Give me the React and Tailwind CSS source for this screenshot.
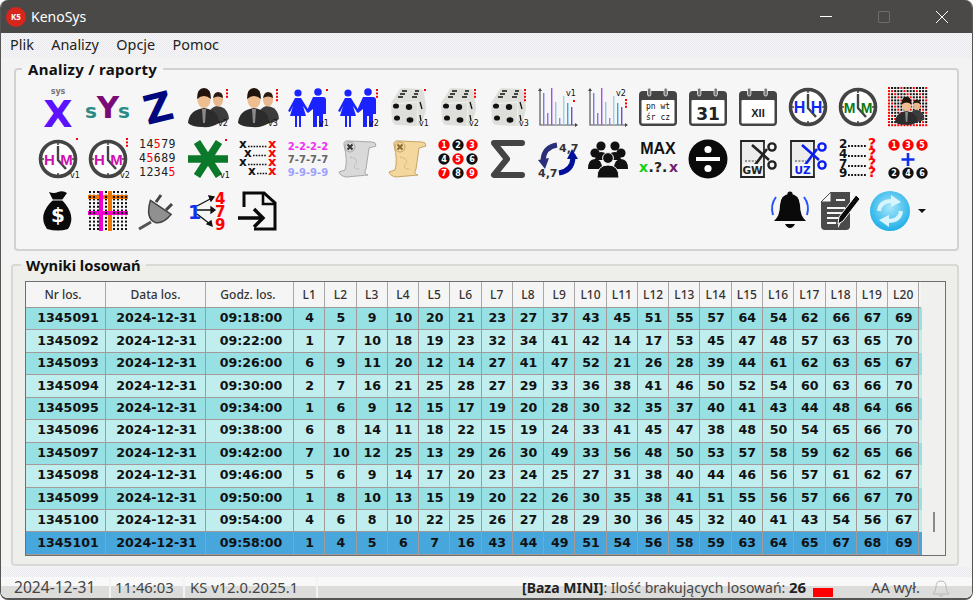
import React from "react";

const SANS = "font-['Noto_Sans',sans-serif]";
const BOLD = "DejaVu Sans, sans-serif";

const rows = [
  ["1345091", "09:18:00", [4, 5, 9, 10, 20, 21, 23, 27, 37, 43, 45, 51, 55, 57, 64, 54, 62, 66, 67, 69]],
  ["1345092", "09:22:00", [1, 7, 10, 18, 19, 23, 32, 34, 41, 42, 14, 17, 53, 45, 47, 48, 57, 63, 65, 70]],
  ["1345093", "09:26:00", [6, 9, 11, 20, 12, 14, 27, 41, 47, 52, 21, 26, 28, 39, 44, 61, 62, 63, 65, 67]],
  ["1345094", "09:30:00", [2, 7, 16, 21, 25, 28, 27, 29, 33, 36, 38, 41, 46, 50, 52, 54, 60, 63, 66, 70]],
  ["1345095", "09:34:00", [1, 6, 9, 12, 15, 17, 19, 20, 28, 30, 32, 35, 37, 40, 41, 43, 44, 48, 64, 66]],
  ["1345096", "09:38:00", [6, 8, 14, 11, 18, 22, 15, 19, 24, 33, 41, 45, 47, 38, 48, 50, 54, 65, 66, 70]],
  ["1345097", "09:42:00", [7, 10, 12, 25, 13, 29, 26, 30, 49, 33, 56, 48, 50, 53, 57, 58, 59, 62, 65, 66]],
  ["1345098", "09:46:00", [5, 6, 9, 14, 17, 20, 23, 24, 25, 27, 31, 38, 40, 44, 46, 56, 57, 61, 62, 67]],
  ["1345099", "09:50:00", [1, 8, 10, 13, 15, 19, 20, 22, 26, 30, 35, 38, 41, 51, 55, 56, 57, 66, 67, 70]],
  ["1345100", "09:54:00", [4, 6, 8, 10, 22, 25, 26, 27, 28, 29, 30, 36, 45, 32, 40, 41, 43, 54, 56, 67]],
  ["1345101", "09:58:00", [1, 4, 5, 6, 7, 16, 43, 44, 49, 51, 54, 56, 58, 59, 63, 64, 65, 67, 68, 69]],
];

const header = ["Nr los.", "Data los.", "Godz. los.", ...Array.from({ length: 20 }, (_, i) => `L${i + 1}`)];

// one toolbar cell, the drawing itself is 40x40
function Ico({ children }) {
  return (
    <button className="w-[50px] h-[52px] flex items-center justify-center shrink-0">
      <svg width="40" height="40" viewBox="0 0 40 40" className="overflow-visible">
        {children}
      </svg>
    </button>
  );
}

function T({ x, y, s = 8, fill = "#111", w = 400, a = "start", f = BOLD, children }) {
  return (
    <text x={x} y={y} fontSize={s} fill={fill} fontWeight={w} textAnchor={a} fontFamily={f}>
      {children}
    </text>
  );
}

const Ver = ({ v, x = 30, y = 39 }) => <T x={x} y={y} s={8}>{v}</T>;

function Dots({ n, x = 38, y = 2 }) {
  return (
    <>
      {Array.from({ length: n }, (_, i) => (
        <rect key={i} x={x} y={y + i * 3.4} width="2" height="2" fill="#f00" />
      ))}
    </>
  );
}

function Men() {
  return (
    <>
      <path d="M19 36 Q20 20 29 19 Q40 20 41 32 Q34 38 19 36Z" fill="#3c3c3c" />
      <ellipse cx="30" cy="13" rx="5" ry="6.5" fill="#e9b88c" />
      <path d="M25 11 Q26 5 30 5 Q35 5 35 11 Q30 8 25 11Z" fill="#2a1c14" />
      <path d="M0 36 Q1 23 16 21 Q31 23 31 36 Q24 41 14 40 Q4 40 0 36Z" fill="#2c2c2c" />
      <path d="M14 22 L18 22 L17 36 L15 36Z" fill="#8a8a8a" />
      <ellipse cx="16" cy="13" rx="6.5" ry="8" fill="#eebd90" />
      <path d="M9 12 Q9 1 16 1 Q23 1 23 12 Q16 6 9 12Z" fill="#20140c" />
    </>
  );
}

function Couple() {
  const c = "#1a22ff";
  return (
    <>
      <circle cx="10" cy="6" r="3.6" fill={c} />
      <path d="M7 11 H13 L21 24 L19 25 L15 19 L18 29 H13 V40 H11 V29 H9 V40 H7 V29 H2 L5 19 L2 25 L0 24Z" fill={c} />
      <circle cx="30" cy="5" r="3.8" fill={c} />
      <path d="M25 10 H35 Q38 10 38 13 V27 H35 V40 H31 V29 H29 V40 H25 V22 L20 26 L18.5 24.5Z" fill={c} />
    </>
  );
}

function Dice() {
  return (
    <>
      <path d="M3 17 Q3 14 5 13 L11 3 Q12 1 15 1 L33 2 Q35 2 36 6 L38 20 Q38 25 35 32 L33 37 Q32 39 29 39 L9 38 Q5 38 4 33Z" fill="#dededa" />
      <path d="M3 17 L30 15 L29 39" fill="none" stroke="#f2f2ef" strokeWidth="1" />
      <g fill="#111">
        <ellipse cx="8" cy="19" rx="3" ry="2.6" />
        <ellipse cx="21" cy="20" rx="3.2" ry="3" />
        <ellipse cx="9" cy="31" rx="3" ry="2.6" />
        <ellipse cx="22" cy="33" rx="3.4" ry="2.8" />
      </g>
      <g stroke="#111" strokeWidth="1.7" fill="none">
        <path d="M14 4 H19 M12 7 H17 M10 10 H15" />
        <path d="M27 4 H31 M26 7 H30 M24 10 H29" />
        <path d="M32 15 L34 22 M32 28 L33 34" strokeWidth="1.3" />
      </g>
    </>
  );
}

function Chart({ bars }) {
  return (
    <>
      <path d="M2 3 V38 H38" fill="none" stroke="#555" strokeWidth="1.2" />
      <path d="M0 4 L2 1 L4 4Z M37 36 L40 38 L37 40Z" fill="#444" />
      {bars.map(([x, h, c]) => (
        <rect key={x} x={x} y={38 - h} width="1.4" height={h} fill={c} />
      ))}
    </>
  );
}

const barsA = [
  [5, 32, "#7a78f0"], [9, 12, "#8a70e0"], [13, 37, "#a050f0"], [17, 23, "#8cc8ea"],
  [21, 7, "#8a8af0"], [25, 29, "#90d8f0"], [29, 22, "#30a8e8"], [33, 18, "#6a50d8"],
];

function Cal({ children }) {
  return (
    <>
      <rect x="1" y="4" width="38" height="35" rx="4" fill="#444" />
      <rect x="3.5" y="13" width="33" height="23.5" rx="1" fill="#fff" />
      <rect x="9.5" y="1" width="3.4" height="8" rx="1.7" fill="#777" stroke="#f5f5f5" strokeWidth="0.8" />
      <rect x="26" y="1" width="3.4" height="8" rx="1.7" fill="#777" stroke="#f5f5f5" strokeWidth="0.8" />
      {children}
    </>
  );
}

function Clock({ a, b, c, s = 16 }) {
  return (
    <>
      <circle cx="20" cy="20" r="17.5" fill="#fff" stroke="#444" strokeWidth="3.6" />
      <path d="M20 1 V6 M20 34 V39 M1 20 H6 M34 20 H39" stroke="#444" strokeWidth="1.6" />
      <path d="M20 7 V21 L28 30" fill="none" stroke="#444" strokeWidth="2.4" />
      <T x="11.5" y="26" s={s} fill={c} w={700} a="middle" f="Liberation Sans, sans-serif">{a}</T>
      <T x="28.5" y="26" s={s} fill={c} w={700} a="middle" f="Liberation Sans, sans-serif">{b}</T>
    </>
  );
}

function Qr() {
  const cells = [];
  for (let i = 0; i < 13; i++) {
    for (let j = 0; j < 13; j++) {
      const red = (i * 5 + j * 3) % 4 === 0 || i === 0 || j === 12;
      cells.push(<rect key={`${i}-${j}`} x={i * 3.1} y={j * 3.1} width="2" height="2" fill={red ? "#f00" : "#111"} />);
    }
  }
  return (
    <>
      {cells}
      <g transform="translate(7 9) scale(0.72)">
        <Men />
      </g>
    </>
  );
}

function NumGrid() {
  const Row = ({ y, d }) => (
    <text y={y} fontSize="11.5" fontFamily="DejaVu Sans Mono, monospace" fill="#222">
      {d.split("").map((ch, i) => (
        <tspan key={i} x={1 + i * 7.4} fill={(d === "12345" ? i === 4 : ch === "5") ? "#f00" : "#222"}>{ch}</tspan>
      ))}
    </text>
  );
  return (
    <>
      <Row y={9} d="14579" />
      <Row y={23} d="45689" />
      <Row y={37} d="12345" />
    </>
  );
}

function XList() {
  const list = [[1, 9], [6, 18], [1, 27], [10, 36]];
  return list.map(([x, y]) => (
    <g key={y}>
      <T x={x} y={y} s={12} w={700}>x</T>
      <line x1={x + 9} x2="29" y1={y - 1.5} y2={y - 1.5} stroke="#111" strokeWidth="1.6" strokeDasharray="1.6 1.2" />
      <T x="30" y={y} s={13} w={700} fill="#f00">x</T>
    </g>
  ));
}

function Scroll({ fill, line, seal }) {
  return (
    <>
      <path d="M6 6 Q5 1 12 2 L34 3 Q38 3 38 7 L31 9 L28 30 Q25 35 30 36 L8 38 Q2 37 1 33 L7 31 Q10 22 6 6Z" fill={fill} stroke={line} strokeWidth="1" />
      <path d="M12 18 Q22 20 17 26 Q14 30 22 30" fill="none" stroke={line} strokeWidth="0.8" strokeDasharray="2 1" />
      <circle cx="12" cy="8" r="5" fill={fill} stroke={line} />
      <path d="M9.5 5.5 L14.5 10.5 M14.5 5.5 L9.5 10.5" stroke={seal} strokeWidth="2" />
    </>
  );
}

function Ball({ x, y, n, c, r = 5.7 }) {
  return (
    <>
      <circle cx={x} cy={y} r={r} fill={c} />
      <T x={x} y={y + 3} s={8} fill="#fff" w={700} a="middle">{n}</T>
    </>
  );
}

function Sync() {
  return (
    <>
      <path d="M5 21 Q6 8 19 6" fill="none" stroke="#2a2f7a" strokeWidth="5" />
      <path d="M0 21 L11 19 L7 30Z" fill="#2a2f7a" />
      <path d="M35 19 Q34 32 21 34" fill="none" stroke="#00109a" strokeWidth="5" />
      <path d="M40 20 L29 20 L34 10Z" fill="#00109a" />
      <T x="21" y={13} s={11} w={700} fill="#333">4,7</T>
      <T x="0" y={38} s={11} w={700} fill="#333">4,7</T>
    </>
  );
}

function Crowd() {
  return (
    <g fill="#111">
      <circle cx="7" cy="14" r="4.6" />
      <circle cx="33" cy="14" r="4.6" />
      <circle cx="13" cy="7" r="4.6" />
      <circle cx="27" cy="7" r="4.6" />
      <path d="M0 30 Q0 20 7 20 Q14 20 14 30Z" />
      <path d="M26 30 Q26 20 33 20 Q40 20 40 30Z" />
      <path d="M7 21 Q8 13 13 13 Q20 13 20 21Z M20 21 Q20 13 27 13 Q32 13 33 21Z" />
      <circle cx="20" cy="19" r="5.4" stroke="#f6f6f6" strokeWidth="1" />
      <path d="M9 39 Q9 26 20 26 Q31 26 31 39Z" stroke="#f6f6f6" strokeWidth="1" />
    </g>
  );
}

function Cut({ label, c }) {
  return (
    <>
      <path d="M3 2 H26 V38 H3Z" fill="#ececec" stroke="#222" strokeWidth="1.8" />
      <path d="M7 22 H18" stroke="#777" strokeWidth="1.4" strokeDasharray="2 1.4" />
      <rect x="26.9" y="5" width="12" height="30" fill="#f6f6f6" />
      <path d="M14 6 L31 21 M14 30 L29 10" stroke={c} strokeWidth="2.6" />
      <circle cx="34" cy="8" r="3.6" fill="#f6f6f6" stroke={c} strokeWidth="2.4" />
      <circle cx="34" cy="26" r="3.6" fill="#f6f6f6" stroke={c} strokeWidth="2.4" />
      <rect x="5" y="25" width="19" height="12" fill="#f6f6f6" />
      <T x="14.5" y={35} s={10.5} w={700} fill={c} a="middle">{label}</T>
    </>
  );
}

function Quest() {
  const list = [[2, 9], [4, 19], [7, 29], [9, 38]];
  return list.map(([n, y]) => (
    <g key={y}>
      <T x="1" y={y} s={12} w={700}>{n}</T>
      <line x1="10" x2="29" y1={y - 2} y2={y - 2} stroke="#111" strokeWidth="1.8" strokeDasharray="1.8 1.4" />
      <T x="30" y={y} s={14} w={700} fill="#f00">?</T>
    </g>
  ));
}

function Bag() {
  return (
    <>
      <path d="M11 1 Q16 3 20 1 Q25 -1 29 2 L24 9 Q39 25 30 38 Q20 41 9 38 Q-1 24 15 9Z" fill="#0a0a0a" />
      <path d="M14 9 H26" stroke="#f6f6f6" strokeWidth="1" />
      <T x="20" y={31} s={20} fill="#fff" w={700} a="middle">$</T>
    </>
  );
}

function Lattice() {
  const cells = [];
  for (let i = 0; i < 10; i++) {
    for (let j = 0; j < 11; j++) {
      cells.push(<rect key={`${i}-${j}`} x={1 + i * 4} y={j * 3.7} width="2" height="2" fill="#111" />);
    }
  }
  return (
    <>
      {cells}
      <rect x="0" y="4" width="40" height="4" fill="#f07800" />
      <rect x="20" y="0" width="4" height="40" fill="#f07800" />
      <rect x="0" y="20" width="40" height="4" fill="#f000d0" />
      <rect x="11" y="0" width="4" height="40" fill="#f000d0" />
      <g fill="#111">
        {[1, 5, 17, 25, 29, 33, 37].map((x) => (
          <rect key={x} x={x} y="5" width="2" height="2" />
        ))}
        {[1, 5, 17, 25, 29, 33, 37].map((x) => (
          <rect key={x} x={x} y="21" width="2" height="2" />
        ))}
      </g>
    </>
  );
}

function Plug() {
  return (
    <>
      <path d="M23 4 L18 11 M34 13 L28 19" stroke="#444" strokeWidth="3" />
      <path d="M13 9 L33 24 Q24 34 16 31 Q7 26 13 9Z" fill="#909090" stroke="#444" strokeWidth="1.5" transform="rotate(-3 20 20)" />
      <path d="M13 31 Q8 34 1 38" fill="none" stroke="#555" strokeWidth="3" />
    </>
  );
}

function Tree() {
  return (
    <>
      <T x="0" y={28} s={19} w={700} fill="#1030f0">1</T>
      <g stroke="#111" strokeWidth="1.3" fill="#111">
        <path d="M9 15 L24 7" />
        <path d="M21 5 L26 6 L23 10Z" />
        <path d="M9 19 H24" />
        <path d="M23 16 L27 19 L23 22Z" />
        <path d="M9 23 L22 33" />
        <path d="M19 33 L24 35 L23 30Z" />
      </g>
      <T x="27" y={13} s={15} w={700} fill="#f00">4</T>
      <T x="27" y={26} s={15} w={700} fill="#f00">7</T>
      <T x="27" y={39} s={15} w={700} fill="#f00">9</T>
    </>
  );
}

function DocIn() {
  return (
    <g fill="none" stroke="#0a0a0a" strokeWidth="3">
      <path d="M6 16 V2 H26 L37 12 V38 H16" />
      <path d="M25 2 V13 H37" strokeWidth="2.6" />
      <path d="M0 27 H25 M16 18 L25 27 L16 36" strokeWidth="3.4" />
    </g>
  );
}

function Bell() {
  return (
    <>
      <path d="M3 24 Q0 14 6 6 M37 24 Q40 14 34 6" fill="none" stroke="#2a52ff" strokeWidth="2" />
      <circle cx="20" cy="3" r="2.6" fill="#0a0a0a" />
      <path d="M20 3 Q29 3 30 14 Q30 25 36 30 H4 Q10 25 10 14 Q11 3 20 3Z" fill="#0a0a0a" />
      <path d="M15 33 H25 Q23 37 20 37 Q17 37 15 33Z" fill="#0a0a0a" />
    </>
  );
}

function Note() {
  return (
    <>
      <path d="M11 1 H30 V12 L18 34 V39 H5 Q1 39 1 35 V11Z" fill="#4a4a4a" />
      <path d="M30 14 V35 Q30 39 26 39 H17 Z" fill="#4a4a4a" />
      <path d="M11 1 V11 H1Z" fill="#f6f6f6" stroke="#4a4a4a" strokeWidth="1" />
      <path d="M16 9 H25 M7 17 H25 M7 22 H22 M7 27 H19 M7 32 H16" stroke="#f6f6f6" strokeWidth="2" />
      <path d="M36 4 L40 8 L23 30 L18 33 L19 26Z" fill="#0a0a0a" stroke="#f6f6f6" strokeWidth="1" />
    </>
  );
}

function Refresh() {
  return (
    <>
      <defs>
        <radialGradient id="rf" cx="50%" cy="40%" r="60%">
          <stop offset="0%" stopColor="#a8e6fa" />
          <stop offset="100%" stopColor="#1eaee8" />
        </radialGradient>
      </defs>
      <circle cx="20" cy="20" r="20" fill="url(#rf)" />
      <path d="M9 20 Q10 10 22 10" fill="none" stroke="#d8f4fc" strokeWidth="4" />
      <path d="M21 4 L31 11 L21 16Z" fill="#d8f4fc" />
      <path d="M31 20 Q30 30 18 30" fill="none" stroke="#d8f4fc" strokeWidth="4" />
      <path d="M19 24 L9 29 L19 36Z" fill="#d8f4fc" />
    </>
  );
}

function Toolbar() {
  return (
    <div className="flex flex-col pl-[17px] pt-[2px]">
      <div className="flex">
        <Ico>
          <T x="20" y={7} s={8} fill="#777" a="middle" w={700}>sys</T>
          <T x="20" y={40} s={38} fill="#5a12ff" a="middle" w={700}>X</T>
        </Ico>
        <Ico>
          <T x="-3" y={31} s={20} fill="#2a8a86" w={700}>s</T>
          <T x="20" y={31} s={31} fill="#7a0a78" w={700} a="middle">Y</T>
          <T x="30" y={31} s={20} fill="#2a8a86" w={700}>s</T>
        </Ico>
        <Ico>
          <g transform="rotate(-14 20 20)">
            <T x="20" y={35} s={40} fill="#00087e" w={700} a="middle">Z</T>
          </g>
        </Ico>
        <Ico><Men /><Ver v="v2" x={30} /><Dots n={3} /></Ico>
        <Ico><Men /><Ver v="v3" x={30} /><Dots n={4} /></Ico>
        <Ico><Couple /><Ver v="v1" x={31} /><Dots n={1} /></Ico>
        <Ico><Couple /><Ver v="v2" x={31} /><Dots n={3} /></Ico>
        <Ico><Dice /><Ver v="v1" x={31} /><Dots n={1} x={36} /></Ico>
        <Ico><Dice /><Ver v="v2" x={31} /><Dots n={3} x={36} /></Ico>
        <Ico><Dice /><Ver v="v3" x={31} /><Dots n={4} x={36} /></Ico>
        <Ico><Chart bars={barsA} /><T x={28} y={9} s={8}>v1</T><Dots n={1} x={35} y={13} /></Ico>
        <Ico><Chart bars={barsA} /><T x={28} y={9} s={8}>v2</T><Dots n={3} x={37} y={12} /></Ico>
        <Ico>
          <Cal>
            <T x={20} y={22} s={8} a="middle" f="DejaVu Sans Mono, monospace">pn wt</T>
            <T x={20} y={33} s={8} a="middle" f="DejaVu Sans Mono, monospace">śr cz</T>
          </Cal>
        </Ico>
        <Ico><Cal><T x={20} y={33} s={17} w={700} a="middle" fill="#222">31</T></Cal></Ico>
        <Ico><Cal><T x={20} y={30} s={11} w={700} a="middle" fill="#222" f="Liberation Sans, sans-serif">XII</T></Cal></Ico>
        <Ico><Clock a="H" b="H" c="#0a28f0" /></Ico>
        <Ico><Clock a="M" b="M" c="#0a7a10" s={14} /></Ico>
        <Ico><Qr /></Ico>
      </div>
      <div className="flex">
        <Ico><Clock a="H" b="M" c="#d010b0" s={15} /><Ver v="v1" x={32} /><Dots n={1} x={38} y={-1} /></Ico>
        <Ico><Clock a="H" b="M" c="#d010b0" s={15} /><Ver v="v2" x={32} /><Dots n={3} x={38} y={-1} /></Ico>
        <Ico><NumGrid /></Ico>
        <Ico>
          <path d="M0 20 H40 M9 3 L31 37 M31 3 L9 37" stroke="#0a7a2a" strokeWidth="7.5" />
          <Ver v="v1" x={32} /><Dots n={1} x={37} y={0} />
        </Ico>
        <Ico><XList /></Ico>
        <Ico>
          <T x={20} y={11} s={10} w={700} a="middle" fill="#f030f0">2-2-2-2</T>
          <T x={20} y={24} s={10} w={700} a="middle" fill="#666">7-7-7-7</T>
          <T x={20} y={37} s={10} w={700} a="middle" fill="#a0a0ff">9-9-9-9</T>
        </Ico>
        <Ico><Scroll fill="#d9d9d9" line="#a8a8a8" seal="#333" /></Ico>
        <Ico><Scroll fill="#f3d79c" line="#c8a468" seal="#8a6a3a" /></Ico>
        <Ico>
          {[1, 2, 3, 4, 5, 6, 7, 8, 9].map((n, i) => (
            <Ball key={n} x={6 + (i % 3) * 14} y={6 + Math.floor(i / 3) * 14} n={n} c={n % 2 ? "#f00" : "#111"} />
          ))}
        </Ico>
        <Ico><path d="M34 4 H6 L19 20 L6 36 H34" fill="none" stroke="#444" strokeWidth="6" strokeLinejoin="round" strokeLinecap="round" /></Ico>
        <Ico><Sync /></Ico>
        <Ico><Crowd /></Ico>
        <Ico>
          <T x={20} y={15} s={16} w={700} a="middle" fill="#111" f="Liberation Sans, sans-serif">MAX</T>
          <T x={1} y={33} s={14} w={700} fill="#10d010">x</T>
          <T x={20} y={33} s={14} w={700} a="middle" fill="#222">.?.</T>
          <T x={31} y={33} s={14} w={700} fill="#702070">x</T>
        </Ico>
        <Ico>
          <circle cx="20" cy="20" r="19.5" fill="#0a0a0a" />
          <rect x="8" y="18" width="24" height="4" fill="#fff" />
          <circle cx="20" cy="10.5" r="3.6" fill="#fff" />
          <circle cx="20" cy="29.5" r="3.6" fill="#fff" />
        </Ico>
        <Ico><Cut label="GW" c="#222" /></Ico>
        <Ico><Cut label="UZ" c="#0a1ef0" /></Ico>
        <Ico><Quest /></Ico>
        <Ico>
          <Ball x={6} y={6} n="1" c="#f00" />
          <Ball x={20} y={6} n="3" c="#f00" />
          <Ball x={34} y={6} n="5" c="#f00" />
          <path d="M20 14 V27 M13.5 20.5 H26.5" stroke="#1030f0" strokeWidth="2.6" />
          <Ball x={6} y={34} n="2" c="#111" />
          <Ball x={20} y={34} n="4" c="#111" />
          <Ball x={34} y={34} n="6" c="#111" />
        </Ico>
      </div>
      <div className="flex items-center">
        <Ico><Bag /></Ico>
        <Ico><Lattice /></Ico>
        <Ico><Plug /></Ico>
        <Ico><Tree /></Ico>
        <Ico><DocIn /></Ico>
        <div className="w-[482px]" />
        <Ico><Bell /></Ico>
        <Ico><Note /></Ico>
        <Ico><Refresh /></Ico>
        <div className="ml-[3px] w-0 h-0 border-x-[4px] border-x-transparent border-t-[4px] border-t-[#111]" />
      </div>
    </div>
  );
}

const cols = "grid grid-cols-[80px_100px_88px_repeat(20,31.27px)]";
const headPad = ["pr-[5px]", "", "pr-[3px]"];
const cellPad = ["pl-[5px]", "pl-[2px]", "pl-[3px]"];

function Table() {
  return (
    <div className="relative mt-[6px] ml-[12px] w-[921px] h-[275px] border border-[#6f6f6f] bg-[#f0f0ee] overflow-hidden">
      <div className={`${cols} h-[26px] w-[895px] bg-[#f5f5f5] border-b border-[#9a9a9a] ${SANS} text-[12px] font-medium text-[#333]`}>
        {header.map((h, j) => (
          <div key={h} className={`flex items-center justify-center border-r border-[#a8a8a8] ${headPad[j] || ""}`}>{h}</div>
        ))}
      </div>
      {rows.map(([nr, time, nums], i) => {
        const bg = i === 10 ? "bg-[#47a6dc]" : i % 2 ? "bg-[#c0eeee]" : "bg-[#97e0e3]";
        return (
          <div key={nr} className={`${cols} h-[22.45px] w-[896px] ${bg} font-['DejaVu_Sans',sans-serif] font-bold text-[12.6px] text-[#111]`}>
            {[nr, "2024-12-31", time, ...nums].map((v, j) => (
              <div key={j} className={`flex items-center justify-center border-r border-b border-[#a49a9a] ${cellPad[j] || "pl-[1px]"}`}>{v}</div>
            ))}
          </div>
        );
      })}
      {/* scrollbar thumb */}
      <div className="absolute right-[10px] top-[230px] w-[2px] h-[20px] bg-[#8a8a8a]" />
    </div>
  );
}

export default function App() {
  const band = "bg-[linear-gradient(#f8f8f8_45%,#dcdcda_45%)]";
  return (
    <div className="w-[973px] h-[600px] bg-white">
      <div className={`h-full flex flex-col rounded-[8px] overflow-hidden border-x border-b-2 border-[#555553] bg-[repeating-conic-gradient(#e8e8ec_0_25%,#f8f8fa_0_50%)] bg-[length:2px_2px] ${SANS}`}>
        {/* title bar */}
        <div className="h-[33px] shrink-0 flex items-center bg-[#4a4947] text-white">
          <div className="ml-[5px] w-[20px] h-[20px] rounded-full bg-[#d8261c] flex items-center justify-center text-[8px] font-bold">K5</div>
          <span className="ml-[5px] text-[14px]">KenoSys</span>
          <div className="ml-auto flex items-center pr-[1px]">
            <div className="w-[58px] flex justify-center"><div className="w-[12px] h-[1px] bg-white" /></div>
            <div className="w-[58px] flex justify-center"><div className="w-[12px] h-[12px] rounded-[1px] border border-[#6d6d6b]" /></div>
            <div className="w-[58px] flex justify-center">
              <svg width="12" height="12" viewBox="0 0 12 12"><path d="M0 0 L12 12 M12 0 L0 12" stroke="#fff" strokeWidth="1" /></svg>
            </div>
          </div>
        </div>

        {/* menu */}
        <div className="h-[25px] shrink-0 flex items-center gap-[17.4px] pl-[9px] text-[14.4px] text-[#222] leading-none">
          <span>Plik</span>
          <span>Analizy</span>
          <span>Opcje</span>
          <span>Pomoc</span>
        </div>

        <div className="flex-1 flex flex-col bg-[#f3f3f3]">
          <fieldset className="mt-[1px] ml-[13px] w-[945px] h-[192px] border-2 border-[#d2d2d0] rounded-[4px] bg-[#f6f6f6]">
            <legend className="ml-[6px] px-[6px] text-[15px] font-bold text-[#111] leading-[20px] tracking-[0.3px]">Analizy / raporty</legend>
            <Toolbar />
          </fieldset>

          <fieldset className="mt-[4px] ml-[10px] w-[948px] h-[311px] border-2 border-[#d8d8d4] rounded-[4px] bg-[#eeeeea]">
            <legend className="ml-[8px] px-[5px] text-[14.7px] font-bold text-[#111] leading-[20px]">Wyniki losowań</legend>
            <Table />
          </fieldset>
        </div>

        {/* status bar */}
        <div className="mt-[10px] h-[21px] shrink-0 flex text-[14.8px] text-[#444] bg-[#f3f3f3] leading-[21px]">
          <div className={`w-[108px] pl-[13px] mr-[2px] text-[15.6px] ${band}`}>2024-12-31</div>
          <div className={`w-[72px] pl-[4px] mr-[2px] ${band}`}>11:46:03</div>
          <div className={`w-[131px] pl-[5px] mr-[2px] whitespace-nowrap ${band}`}>KS v12.0.2025.1</div>
          <div className={`flex-1 flex items-center whitespace-nowrap text-[14px] ${band}`}>
            <span className="ml-[204px]"><b className="text-[#222]">[Baza MINI]</b>: Ilość brakujących losowań: <b className="text-[#222] text-[15px]">26</b></span>
            <div className="ml-[7px] w-[20px] h-[9px] mt-[10px] bg-[#ff0000]" />
            <span className="ml-[38px] text-[14.5px]">AA wył.</span>
            <svg width="18" height="20" viewBox="0 0 18 20" className="ml-[12px]">
              <path d="M9 3 Q14 3 14 9 Q14 13 17 16 H1 Q4 13 4 9 Q4 3 9 3Z M7 17 Q9 20 11 17" fill="none" stroke="#b8b8b8" />
            </svg>
          </div>
        </div>
      </div>
    </div>
  );
}
